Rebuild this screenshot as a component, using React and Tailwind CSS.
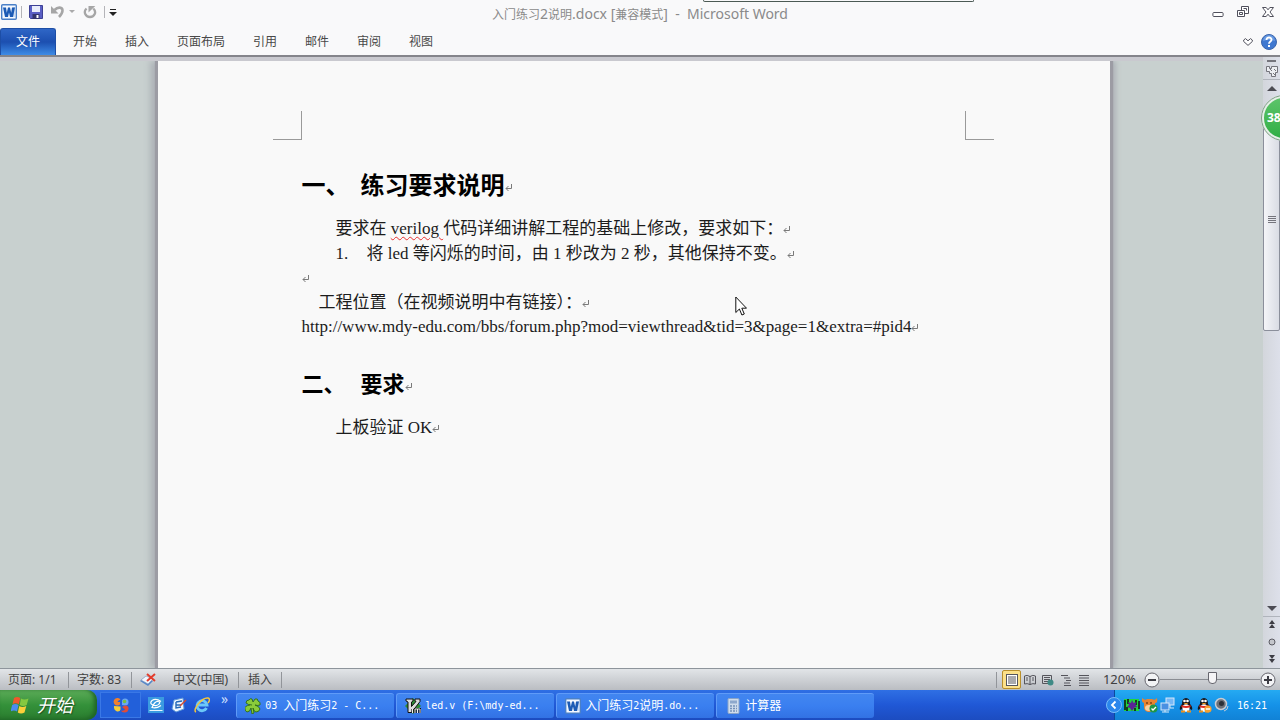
import React from "react";

const ui = "font-['Noto_Sans','Noto_Sans_CJK_SC',sans-serif]";

function WordIcon({ className }) {
  return (
    <svg viewBox="0 0 16 16" className={className} aria-hidden="true">
      <rect x=".7" y=".7" width="14.600" height="14.600" rx="1" fill="#f4f9ff" stroke="#4a80c8" strokeWidth="1.400" />
      <path d="M13 3v10" stroke="#a9c6ea" />
      <path d="M2 3.500h3l.8 5.200L7 3.500h2l1.200 5.200.8-5.200h3L12 13H9L8 8.500 7 13H4z" fill="#1c5bb5" />
    </svg>
  );
}

function QuickAccess() {
  return (
    <div className="flex items-center">
      <WordIcon className="ml-px size-4" />
      <span className="ml-1 h-3 w-px bg-[#b4b4b8]" />
      <button aria-label="保存" className="ml-[7px]">
        <svg viewBox="0 0 14 14" className="size-[14px]">
          <path d="M.5.5h13v13h-12l-1-1z" fill="#5a5fc4" stroke="#3d4094" />
          <rect x="3" y="1" width="8" height="6" fill="#e8ecfa" />
          <rect x="3.500" y="9" width="7" height="5" fill="#33356e" />
          <rect x="7.500" y="10" width="2" height="3" fill="#fff" />
        </svg>
      </button>
      <button aria-label="撤消" className="ml-2">
        <svg viewBox="0 0 14 14" className="size-[14px]">
          <path d="M3.500 5C7 1.500 11.500 2 11.500 5.500c0 3-2 5-3.500 6.500" fill="none" stroke="#a6a6a6" strokeWidth="2.600" />
          <path d="M0 1v7.500h7.500z" fill="#a6a6a6" />
        </svg>
      </button>
      <button aria-label="撤消选项" className="ml-1">
        <svg viewBox="0 0 6 4" className="h-1 w-[6px]"><path d="M0 0h6L3 3z" fill="#aaa" /></svg>
      </button>
      <button aria-label="重复" className="ml-2">
        <svg viewBox="0 0 14 14" className="size-[14px]">
          <path d="M3.500 3.500C0 7 2.500 12 7 12s7-5 3.300-8.500" fill="none" stroke="#a6a6a6" strokeWidth="2.300" />
          <path d="M5.500 1h6.800L5.500 7.500z" fill="#a6a6a6" />
        </svg>
      </button>
      <span className="ml-[7px] h-3 w-px bg-[#b4b4b8]" />
      <button aria-label="自定义快速访问工具栏" className="ml-1">
        <svg viewBox="0 0 8 7" className="h-[7px] w-2"><path d="M1 .5h6" stroke="#222" /><path d="M0 3h8L4 7z" fill="#222" /></svg>
      </button>
    </div>
  );
}

function TitleBar() {
  return (
    <header className="relative flex h-7 shrink-0 items-start justify-between">
      <div className="flex h-6 items-center"><QuickAccess /></div>
      <h1 className="absolute inset-x-0 top-1 flex items-baseline justify-center text-[14px] leading-5 text-[#8a8a8a]">
        <span className="whitespace-pre">
          <span className="text-[12px]">入门练习</span>2<span className="text-[12px]">说明</span>.docx [<span className="text-[12px]">兼容模式</span>]  -  Microsoft Word
        </span>
      </h1>
      <div className="absolute right-[306px] top-0 h-[2px] w-[271px] max-w-[40%] rounded-b-sm border border-t-0 border-[#4c5a54]" />
      <div className="flex h-6 items-center gap-[13px] pr-[6px]">
        <button aria-label="最小化">
          <svg viewBox="0 0 12 12" className="size-3"><rect x=".9" y="6.500" width="10.200" height="4" rx="1" fill="#fff" stroke="#50505c" /></svg>
        </button>
        <button aria-label="向下还原">
          <svg viewBox="0 0 12 12" className="size-3">
            <path d="M4.500.5h7v7h-7z" fill="#fff" stroke="#50505c" /><path d="M6.500 2.500h3v2" fill="none" stroke="#50505c" />
            <path d="M.5 4.500h7v6h-7z" fill="#fff" stroke="#50505c" /><path d="M2.500 6.500h3v2h-3z" fill="#fff" stroke="#50505c" />
          </svg>
        </button>
        <button aria-label="关闭">
          <svg viewBox="0 0 12 12" className="size-3">
            <path d="M.5 1.500h3.700L6 3.800l1.800-2.300h3.700L8 6l3.500 4.500H7.800L6 8.200l-1.800 2.300H.5L4 6z" fill="#fff" stroke="#50505c" />
          </svg>
        </button>
      </div>
    </header>
  );
}

function Ribbon() {
  const tabs = ["开始", "插入", "页面布局", "引用", "邮件", "审阅", "视图"];
  return (
    <nav className="flex h-[29px] shrink-0 border-b-2 border-[#84848a] text-[12px] text-[#484848]">
      <button className="mr-[3px] w-14 rounded-t-[3px] border border-b-0 border-[#1d4ea6] bg-linear-to-b from-[#2f66c6] via-[#1c4fb0] to-[#3f8be6] text-white">文件</button>
      {tabs.map((t) => (
        <button key={t} className="px-[14px]">{t}</button>
      ))}
      <div className="ml-auto flex items-center gap-2 pr-[3px]">
        <button aria-label="功能区最小化">
          <svg viewBox="0 0 10 8" className="h-2 w-[10px]">
            <path d="M.7 2 2.500.6 5 2.800 7.500.6 9.300 2v1.500L5 7.400.7 3.500z" fill="#fff" stroke="#50505c" />
          </svg>
        </button>
        <button aria-label="帮助">
          <svg viewBox="0 0 16 16" className="size-4">
            <circle cx="8" cy="8" r="7.500" fill="#3f78d0" stroke="#3c66ac" />
            <path d="M2 7a6 6 0 0 1 12 0q-6-2-12 0" fill="#7ba8e8" opacity=".7" />
            <path d="M5.500 6C5.500 2.500 10.800 2.800 10.500 6 10.400 7.500 8 7.700 8 9.700" fill="none" stroke="#fff" strokeWidth="1.900" />
            <rect x="7" y="11" width="2" height="2" fill="#fff" />
          </svg>
        </button>
      </div>
    </nav>
  );
}

function Mark() {
  return (
    <svg viewBox="0 0 8 8" className="inline-block size-2" aria-hidden="true">
      <path d="M6.500 0v4.500H1M3.500 2 1 4.500 3.500 7" fill="none" stroke="#7a7a7a" />
    </svg>
  );
}

function Page() {
  return (
    <main className="min-h-full w-[952px] max-w-full bg-[#f9f9f9] pt-[50px] shadow-[-3px_0_1px_#9c9ca4,-8px_0_6px_#aeb3b8,3px_0_1px_#9c9ca4,6px_0_5px_#aeb3b8]">
      <div className="flex justify-between pr-4 pl-[115px]">
        <span className="size-[29px] border-r border-b border-[#9a9a9a]" />
        <span className="mr-[100px] size-[29px] border-b border-l border-[#9a9a9a]" />
      </div>
      <article className="px-36 pt-7 font-['Liberation_Serif','Noto_Sans_CJK_SC',serif] text-[17px] leading-[25px] text-[#1c1c1c]">
        <h2 className="flex items-center text-[24px] leading-9 font-bold text-black">
          <span className="w-[59px]">一、</span>
          <span>练习要求说明<Mark /></span>
        </h2>
        <p className="mt-3 pl-[34px]">
          要求在 <span className="underline decoration-[#e83030] decoration-wavy decoration-1 underline-offset-2">verilog </span>代码详细讲解工程的基础上修改，要求如下：<Mark />
        </p>
        <ol>
          <li className="flex pl-[34px]"><span className="w-[31px]">1.</span><span>将 led 等闪烁的时间，由 1 秒改为 2 秒，其他保持不变。<Mark /></span></li>
        </ol>
        <p className="leading-6"><Mark /></p>
        <p className="pl-[17px]">工程位置（在视频说明中有链接）：<Mark /></p>
        <p className="break-all leading-6">http://www.mdy-edu.com/bbs/forum.php?mod=viewthread&amp;tid=3&amp;page=1&amp;extra=#pid4<Mark /></p>
        <h2 className="mt-7 flex items-center text-[22px] leading-9 font-bold text-black">
          <span className="w-[59px]">二、</span>
          <span>要求<Mark /></span>
        </h2>
        <p className="mt-3 pl-[34px]">上板验证 OK<Mark /></p>
      </article>
    </main>
  );
}

function ScrollBar() {
  return (
    <aside className="relative flex w-[17px] shrink-0 flex-col items-center bg-linear-to-r from-[#d3d6dc] to-[#dde0ea]">
      <span className="mt-[3px] h-[2px] w-[9px] bg-[#74747c]" />
      <button aria-label="标尺" className="mt-[3px]">
        <svg viewBox="0 0 12 12" className="size-3">
          <path d="M.5 1.500h3v2h2v-2h6v6h-2v4h-4v-3h-2v-2h-3z" fill="#eceef2" stroke="#74747c" />
          <path d="m4 4 2 2m1 2 2 2M8 4l2 2" stroke="#74747c" />
        </svg>
      </button>
      <span className="mt-[2px] h-px w-full bg-[#b0b4bc]" />
      <button aria-label="向上滚动" className="mt-[6px]">
        <svg viewBox="0 0 10 5" className="h-[5px] w-[10px]"><path d="M0 5h10L5 0z" fill="#4c4c54" /></svg>
      </button>
      <div className="mt-4 flex h-[224px] w-full flex-col items-center justify-center gap-px rounded-[2px] border border-[#8b8f9b] bg-linear-to-r from-[#f4f5f8] to-[#d9dce4]">
        <span className="h-px w-2 bg-[#74747c]" />
        <span className="h-px w-2 bg-[#74747c]" />
        <span className="h-px w-2 bg-[#74747c]" />
        <span className="h-px w-2 bg-[#74747c]" />
      </div>
      <button aria-label="向下滚动" className="mt-auto">
        <svg viewBox="0 0 10 5" className="h-[5px] w-[10px]"><path d="M0 0h10L5 5z" fill="#4c4c54" /></svg>
      </button>
      <span className="mt-[5px] h-px w-full bg-[#b0b4bc]" />
      <div className="flex h-[51px] flex-col items-center justify-between pt-[3px] pb-[5px]">
        <button aria-label="前一页"><svg viewBox="0 0 6 8" className="h-2 w-[6px]"><path d="M0 4h6L3 0zM0 8h6L3 4z" fill="#3c3c44" /></svg></button>
        <button aria-label="选择浏览对象"><svg viewBox="0 0 8 8" className="size-2"><circle cx="4" cy="4" r="3" fill="#c4c6cc" stroke="#5c5c64" /></svg></button>
        <button aria-label="下一页"><svg viewBox="0 0 6 8" className="h-2 w-[6px]"><path d="M0 0h6L3 4zM0 4h6L3 8z" fill="#3c3c44" /></svg></button>
      </div>
      <div className="absolute top-[38px] right-0 h-[46px] w-[19px] overflow-hidden">
        <div className="flex size-[46px] items-center rounded-full border-[3px] border-[#e6efe8] bg-linear-to-b from-[#5cc46a] to-[#2fae44] pl-[3px] text-[12px] font-bold text-white outline-1 -outline-offset-1 outline-[#7d9c84]">38</div>
      </div>
    </aside>
  );
}

function ViewIcon({ d, label, active }) {
  return (
    <button aria-label={label} className={active ? "flex h-[19px] w-[19px] items-center justify-center rounded-[2px] border border-[#b98f2c] bg-[#fbe08a]" : "flex h-[19px] w-[18px] items-center justify-center"}>
      <svg viewBox="0 0 12 12" className="size-3">
        {active && <rect x=".5" y=".5" width="11" height="11" fill="#fff" stroke="#55555c" />}
        <path d={d} fill="none" stroke="#55555c" />
        {label === "Web 版式视图" && <circle cx="8.500" cy="8.500" r="3" fill="#3e8a86" />}
      </svg>
    </button>
  );
}

function StatusBar() {
  return (
    <footer className="flex h-[22px] shrink-0 items-center border-t border-[#8e959c] bg-linear-to-b from-[#e2e5e8] to-[#babdc2] text-[12px] text-[#404040]">
      <span className="w-[68px] pl-2">页面: 1/1</span>
      <span className="h-4 w-px bg-[#92959a]" />
      <span className="w-[62px] pl-2">字数: 83</span>
      <span className="h-4 w-px bg-[#92959a]" />
      <button aria-label="校对错误" className="ml-2">
        <svg viewBox="0 0 16 14" className="h-[14px] w-4">
          <path d="m0 8 5-4 8 4-5 5z" fill="#5686c8" /><path d="m1 7 5-4 7 3-5 5z" fill="#f2f6fc" stroke="#7590b8" strokeWidth=".6" />
          <path d="m7 1 8 7M15 1 7 8" stroke="#e23c2c" strokeWidth="2" />
        </svg>
      </button>
      <span className="w-[82px] pl-[17px] whitespace-nowrap">中文(中国)</span>
      <span className="h-4 w-px bg-[#92959a]" />
      <span className="w-[42px] pl-[9px]">插入</span>
      <span className="h-4 w-px bg-[#92959a]" />
      <div className="ml-auto flex items-center">
        <span className="mr-[5px] h-4 w-px bg-[#92959a]" />
        <ViewIcon active label="页面视图" d="M2 3h8M2 5h8M2 7h8M2 9h8" />
        <ViewIcon label="阅读版式视图" d="M6 2v9M6 2.500Q3 .5.500 2v8Q3 9 6 10.500 9 9 11.500 10V2Q9 .5 6 2.500M2 4h2M2 6h2M8 4h2M8 6h2" />
        <ViewIcon label="Web 版式视图" d="M.5 1.500h9v8h-9zM2 3.500h6M2 5.500h6M2 7.500h4" />
        <ViewIcon label="大纲视图" d="M1 1.500h7M4 4h6M6 6.500h5M4 9h6M4 11.500h7" />
        <ViewIcon label="草稿视图" d="M1 1.500h10M1 4h10M1 6.500h10M1 9h10M1 11.500h10" />
        <span className="w-[43px] text-right text-[13px]">120%</span>
        <button aria-label="缩小" className="ml-2">
          <svg viewBox="0 0 16 16" className="size-4"><circle cx="8" cy="8" r="7" fill="#f2f3f5" stroke="#66666e" /><path d="M4 8h8" stroke="#3c3c44" strokeWidth="2" /></svg>
        </button>
        <input
          type="range" min="0" max="100" defaultValue="53" aria-label="显示比例"
          className="h-3 w-[100px] appearance-none bg-transparent [&::-webkit-slider-runnable-track]:h-px [&::-webkit-slider-runnable-track]:bg-[#8a8d93] [&::-webkit-slider-thumb]:-mt-[7px] [&::-webkit-slider-thumb]:h-3 [&::-webkit-slider-thumb]:w-[9px] [&::-webkit-slider-thumb]:appearance-none [&::-webkit-slider-thumb]:rounded-b-[4px] [&::-webkit-slider-thumb]:border [&::-webkit-slider-thumb]:border-[#66666e] [&::-webkit-slider-thumb]:bg-[#f4f4f6]"
        />
        <button aria-label="放大" className="mr-1">
          <svg viewBox="0 0 16 16" className="size-4"><circle cx="8" cy="8" r="7" fill="#f2f3f5" stroke="#66666e" /><path d="M4 8h8M8 4v8" stroke="#3c3c44" strokeWidth="2" /></svg>
        </button>
      </div>
    </footer>
  );
}

function TaskButton({ icon, children }) {
  return (
    <button className="flex h-[25px] w-[158px] items-center gap-1 overflow-hidden rounded-[3px] border-t border-l border-t-[#5f9bf8] border-l-[#5f9bf8] bg-linear-to-b from-[#4286f0] via-[#3a7ff0] to-[#3272e4] pl-2 text-[12px] whitespace-pre text-white">
      {icon}
      <span className="flex items-center">{children}</span>
    </button>
  );
}

function Mono({ children }) {
  return <span className="font-['DejaVu_Sans_Mono',monospace] text-[10px]">{children}</span>;
}

function Penguin({ busy }) {
  return (
    <svg viewBox="0 0 16 16" className="size-4" aria-hidden="true">
      <path d="M2 13q-1-3 2-6 0-6 4-6t4 6q3 3 2 6l-2-1q-4 4-8 0z" fill="#16161c" />
      <ellipse cx="8" cy="11" rx="3.600" ry="3.800" fill="#fff" />
      <circle cx="6.500" cy="4" r="1.300" fill="#fff" /><circle cx="9.500" cy="4" r="1.300" fill="#fff" />
      <path d="M5.500 6h5L8 7.600z" fill="#f6a21c" />
      <path d="M3.500 8q4.500 2 9 0v2q-4.500 2-9 0z" fill="#e02c20" />
      <path d="M3 14.500h4M9 14.500h4" stroke="#f0921c" strokeWidth="2" />
      {busy && <><circle cx="12" cy="12" r="3.600" fill="#f6a030" /><path d="M9.800 12h4.400" stroke="#fff" strokeWidth="1.500" /></>}
    </svg>
  );
}

function TaskBar() {
  return (
    <footer className="flex h-[30px] shrink-0 items-center bg-linear-to-b from-[#2f6fe4] via-[#2058d6] to-[#1c4cc0] text-white">
      <button className="flex h-full w-[97px] items-center gap-2 rounded-r-[10px] bg-linear-to-b from-[#5cac58] via-[#34913a] to-[#2a7c2e] pl-[11px] text-[18px] italic shadow-[inset_-3px_-1px_4px_#1f6426] [text-shadow:1px_1px_1px_#1f4f22]">
        <svg viewBox="0 0 18 18" className="size-[18px]" aria-hidden="true">
          <path d="M3 2q3-2 6.300 0L7.800 8.300q-3-2-6.300 0z" fill="#f0582c" /><path d="M10 2.500q3 2 7.500 0L15.700 9q-3.500 2-7 0z" fill="#86c940" />
          <path d="M1.200 9q3-2 6.300 0L6 15.500q-3-2-6.500 0z" fill="#4c8cf0" /><path d="M8.300 10q3 2 7 0L13.500 16.500q-3.500 2-6.700 0z" fill="#fccf3a" />
        </svg>
        开始
      </button>
      <div className="ml-[3px] flex h-[26px] w-[41px] items-center justify-center border border-[#3a78e6] bg-[#2260da]">
        <svg viewBox="0 0 16 16" className="size-4" aria-hidden="true">
          <path d="M7.500 2.500A3.800 3.800 0 1 0 7 7.500L7 5H4.500q0-1.500 3-2.500" fill="#f0802c" />
          <path d="M9 4.500q0-3 3-3 3.500 0 3.500 3.500T12 8.500L9 8z" fill="#6aa6f6" />
          <circle cx="11.500" cy="4.500" r="1.800" fill="#76c043" />
          <path d="M1 9q-.5 4 3 5.500 3 .5 3.500-2V9.500z" fill="#f6ce38" />
          <path d="M9 10l3-1.500q4 0 3.500 3.500t-4 3.500q-3 0-3.500-2 3.500.5 4-1z" fill="#e04c38" />
        </svg>
      </div>
      <div className="ml-[7px] flex items-center gap-[7px]">
        <button aria-label="显示桌面">
          <svg viewBox="0 0 16 16" className="size-4"><rect width="16" height="16" fill="#3a9be0" /><path d="M13 4.500Q8 1 4 3.500q-3 3 1 4.500t6-1q2-2-1-2.500T4 10.500q4 1.500 9-2" fill="none" stroke="#fff" strokeWidth="1.200" /><path d="M1.500 13.500h13" stroke="#e8f4ff" /></svg>
        </button>
        <button aria-label="编辑器">
          <svg viewBox="0 0 16 16" className="size-4"><path d="M3 3l9-2 1 11-8 3-4-3z" fill="#eef6ff" stroke="#5b95d8" /><path d="M5 5l6-1M5 5v6l5-1M5 8h5" fill="none" stroke="#2469b8" strokeWidth="1.400" /><path d="m9 9 6-6" stroke="#d64a30" strokeWidth="1.500" /></svg>
        </button>
        <button aria-label="Internet Explorer">
          <svg viewBox="0 0 16 16" className="size-4"><path d="M12.500 11A5 5 0 1 1 13 8H4" fill="none" stroke="#6cc8f8" strokeWidth="2.800" /><path d="M2 15C-2 13 8 0 14 1q3 1 0 5" fill="none" stroke="#f4c63c" strokeWidth="1.500" /></svg>
        </button>
        <button aria-label="更多" className="mb-3 ml-1 text-[14px] leading-4 text-[#c9defc]">»</button>
      </div>
      <div className="ml-2 flex gap-[2px]">
        <TaskButton icon={
          <svg viewBox="0 0 16 16" className="size-4" aria-hidden="true"><path d="M7 7Q3 7 1 5q0-3 3-3 1-2 3-1l1 3 2-3q3-1 3 2 3 1 2 4-3 1-5 0 4 1 5 4-1 3-4 3-2 0-3-4l1 5-2 1-1-6q-1 4-4 4-2-1-2-3-1-3 5-4" fill="#8acb3a" stroke="#2e6c14" strokeWidth=".9" /></svg>
        }><Mono>03 </Mono>入门练习<Mono>2 - C...</Mono></TaskButton>
        <TaskButton icon={
          <svg viewBox="0 0 16 16" className="size-4" aria-hidden="true"><path d="m8 0 8 8-8 8-8-8z" fill="#2d8a34" /><path d="M1 1h7v2L6.500 4v4.500l4.500-5L10 3V1h5v2.500L6.500 14.500H3V4L1 3z" fill="#dcdcdc" stroke="#111" /><path d="M7.500 15v-4m2.500 4v-4h2.500v4m0-4H15v4" fill="none" stroke="#111" strokeWidth="2.200" /><path d="M7.500 15v-4m2.500 4v-4h2.500v4m0-4H15v4" fill="none" stroke="#eee" /></svg>
        }><Mono>led.v (F:\mdy-ed...</Mono></TaskButton>
        <TaskButton icon={<WordIcon className="size-4" />}>入门练习<Mono>2</Mono>说明<Mono>.do...</Mono></TaskButton>
        <TaskButton icon={
          <svg viewBox="0 0 16 16" className="size-4" aria-hidden="true"><rect x="3" y=".5" width="11" height="15" rx="1" fill="#cfdcec" stroke="#8aa4c8" /><rect x="5" y="2.500" width="7" height="3" fill="#8ea8cc" /><path d="M5 8h2m1 0h2m1 0h1M5 10.500h2m1 0h2m1 0h1M5 13h2m1 0h2m1 0h1" stroke="#7490b8" strokeWidth="1.500" /></svg>
        }>计算器</TaskButton>
      </div>
      <div className="relative ml-auto flex h-full w-[166px] items-center border-l border-[#0c4a9c] bg-linear-to-b from-[#25aaf2] via-[#1592e8] to-[#1182d6] pl-[9px]">
        <button aria-label="显示隐藏的图标" className="absolute top-[7px] -left-[9px]">
          <svg viewBox="0 0 16 16" className="size-4"><circle cx="8" cy="8" r="7.500" fill="#2a86ec" stroke="#78bdf8" /><path d="M9.500 4.500 6 8l3.500 3.500" fill="none" stroke="#fff" strokeWidth="1.800" /></svg>
        </button>
        <div className="flex gap-[2px]">
          <svg viewBox="0 0 16 16" className="size-4" aria-hidden="true"><rect y="2" width="15" height="12" fill="#1fd63c" /><path d="M1 3v10M4 2v5M12 3v5M15 4v8M3 10v4M11 11v3" stroke="#111" strokeWidth="1.500" /><path d="m8 3 1.500 3 3-1-1 3 2 2-3 .5L8 14l-2-3-3-1 2-2-1-3 3 1z" fill="#5a2296" /></svg>
          <svg viewBox="0 0 16 16" className="size-4" aria-hidden="true"><path d="M0 1q3 3 5 1h5q3 2 5-1 1 5-2 5v5q-2 4-6 4t-5-4V6Q-1 5 0 1" fill="#e88432" /><ellipse cx="7" cy="11" rx="4" ry="3" fill="#f8d0a0" /><path d="M5 5v2M9 5v2" stroke="#4a2008" /><circle cx="11.500" cy="11.500" r="4" fill="#1f9648" /><path d="m9.500 11.500 1.500 1.500 3-3" fill="none" stroke="#fff" strokeWidth="1.300" /></svg>
          <svg viewBox="0 0 16 16" className="size-4" aria-hidden="true"><rect x="6" y="1" width="8" height="7" fill="#78b8f6" stroke="#d6e8fa" /><path d="M10 8v3h4" stroke="#d6e8fa" fill="none" /><rect x="1" y="6" width="8" height="7" fill="#4a90e2" stroke="#d6e8fa" /><path d="M5 13v2M2 15h7" stroke="#d6e8fa" /></svg>
          <Penguin />
          <Penguin busy />
          <svg viewBox="0 0 16 16" className="size-4" aria-hidden="true"><circle cx="7" cy="7" r="5.500" fill="#6c7078" stroke="#c8ccd4" strokeWidth="1.500" /><circle cx="7.500" cy="6.500" r="2.500" fill="#2c3038" /><path d="M10 14q4-1 4-5" stroke="#c8ccd4" fill="none" /></svg>
        </div>
        <time className="ml-[7px] font-['DejaVu_Sans_Mono',monospace] text-[10px]">16:21</time>
      </div>
    </footer>
  );
}

function Cursor() {
  return (
    <svg viewBox="0 0 12 20" className="pointer-events-none absolute top-[296px] left-[735px] h-5 w-3" aria-hidden="true">
      <path d="M.8 1v15.500l3.600-3.500 2.500 6 2.400-1-2.500-5.800h4.700z" fill="#fff" stroke="#111" />
    </svg>
  );
}

export default function App() {
  return (
    <div className={`relative flex h-screen flex-col overflow-hidden bg-[#f9f9fa] ${ui}`}>
      <TitleBar />
      <Ribbon />
      <div className="flex min-h-0 flex-1">
        <div className="flex min-w-0 flex-1 justify-center overflow-hidden border-t-4 border-[#c9c9cf] bg-[#c8d0cf] pl-1">
          <Page />
        </div>
        <ScrollBar />
      </div>
      <StatusBar />
      <TaskBar />
      <Cursor />
    </div>
  );
}
